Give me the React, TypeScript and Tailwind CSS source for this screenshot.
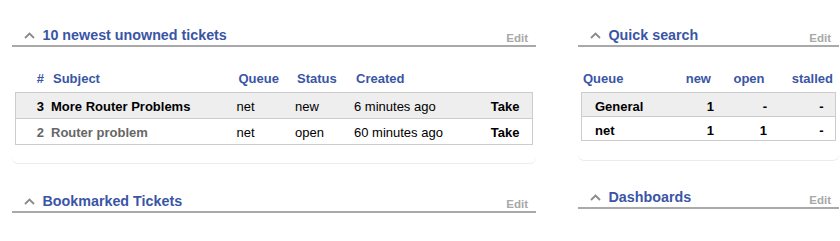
import React from 'react';

const Chevron: React.FC = () => (
  <svg width="11" height="7" viewBox="0 0 11 7" className="shrink-0">
    <polyline points="1,6 5.5,1.5 10,6" fill="none" stroke="#8a8a8a" strokeWidth="1.8" />
  </svg>
);

const PanelHeader: React.FC<{ title: string }> = ({ title }) => (
  <div className="flex h-[22px] items-center border-b-2 border-[#a9a9a9] pl-3 pr-2">
    <Chevron />
    <span className="ml-[7.5px] text-[14.3px] leading-[20px] font-bold text-[#3a55a5]">{title}</span>
    <span className="ml-auto self-end text-[11.5px] leading-[13px] font-bold text-[#a8a8a8]">Edit</span>
  </div>
);

const tickets = [
  { id: 3, subject: 'More Router Problems', queue: 'net', status: 'new', created: '6 minutes ago', visited: false },
  { id: 2, subject: 'Router problem', queue: 'net', status: 'open', created: '60 minutes ago', visited: true },
];

const queues = [
  { name: 'General', newCount: '1', open: '-', stalled: '-' },
  { name: 'net', newCount: '1', open: '1', stalled: '-' },
];

const App: React.FC = () => {
  return (
    <div className="flex gap-[42px] bg-white pt-[25px] pl-[12px] font-['Liberation_Sans',Arial,Helvetica,sans-serif] text-black">
      {/* left column */}
      <div className="w-[524px] shrink-0">
        <PanelHeader title="10 newest unowned tickets" />
        <div className="rounded-b-md px-[3px] pt-[18px] pb-[18px] shadow-[0_1px_0_#ececec]">
          <div className="flex h-[27px] items-center px-px text-[13px] font-bold text-[#3a55a5]">
            <div className="w-[28px] text-right">#</div>
            <div className="w-[192.5px] pl-[9px]">Subject</div>
            <div className="w-[58.5px] pl-[2px]">Queue</div>
            <div className="w-[59px] pl-[2px]">Status</div>
            <div className="flex-1 pl-[2px]">Created</div>
          </div>
          <div className="border border-[#cccccc] text-[13px] leading-[15px]">
            {tickets.map((t, i) => (
              <div
                key={t.id}
                className={`flex pt-[6px] pb-[4px] ${i > 0 ? 'border-t border-[#cccccc] bg-white' : 'bg-[#eeeeee]'}`}
              >
                <div className={`w-[28px] text-right font-bold ${t.visited ? 'text-[#666666]' : 'text-black'}`}>{t.id}</div>
                <div className={`w-[192.5px] pl-[7px] font-bold ${t.visited ? 'text-[#666666]' : 'text-black'}`}>{t.subject}</div>
                <div className="w-[58.5px]">{t.queue}</div>
                <div className="w-[59px]">{t.status}</div>
                <div className="flex-1">{t.created}</div>
                <div className="pr-[12.5px] font-bold">Take</div>
              </div>
            ))}
          </div>
        </div>

        <div className="mt-[28px]">
          <PanelHeader title="Bookmarked Tickets" />
        </div>
      </div>

      {/* right column */}
      <div className="w-[261px] shrink-0">
        <PanelHeader title="Quick search" />
        <div className="rounded-b-md px-[3px] pt-[18px] pb-[19px] shadow-[0_1px_0_#ececec]">
          <div className="flex h-[27px] items-center text-[13px] font-bold text-[#3a55a5]">
            <div className="w-[80px] pl-[2px]">Queue</div>
            <div className="w-[50px] text-right">new</div>
            <div className="w-[53.5px] text-right">open</div>
            <div className="w-[68.5px] text-right">stalled</div>
          </div>
          <div className="border border-[#cccccc] text-[13px] leading-[15px] font-bold">
            {queues.map((q, i) => (
              <div
                key={q.name}
                className={`flex pt-[6px] pb-[2px] ${i > 0 ? 'border-t border-[#cccccc] bg-white' : 'bg-[#eeeeee]'}`}
              >
                <div className="w-[82px] pl-[13px]">{q.name}</div>
                <div className="w-[50px] text-right">{q.newCount}</div>
                <div className="w-[53px] text-right">{q.open}</div>
                <div className="w-[56.5px] text-right">{q.stalled}</div>
              </div>
            ))}
          </div>
        </div>

        <div className="mt-[27px]">
          <PanelHeader title="Dashboards" />
        </div>
      </div>
    </div>
  );
};

export default App;
